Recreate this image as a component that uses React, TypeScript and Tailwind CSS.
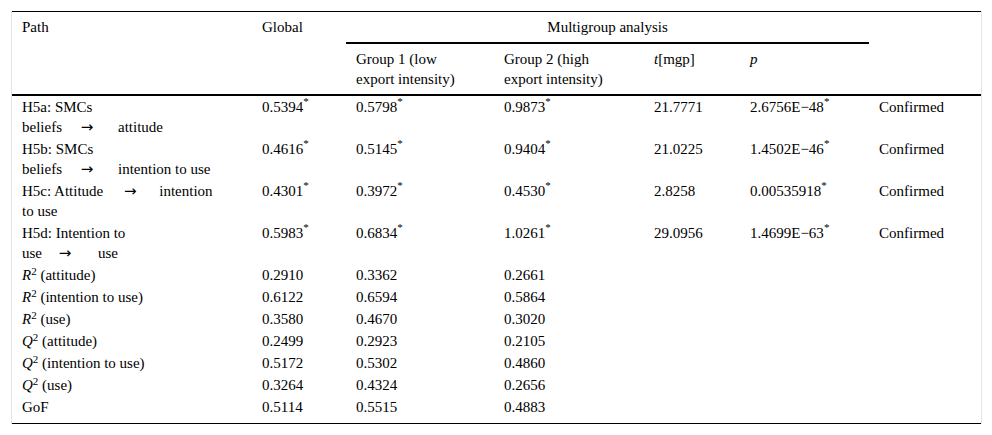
import React from "react";

const Star = () => <sup className="text-[11px] -top-[0.6em]">*</sup>;

const Arrow = ({ className }: { className: string }) => (
  <span
    className={`inline-block w-[14px] text-center font-['DejaVu_Sans',sans-serif] text-[15px] ${className}`}
  >
    →
  </span>
);

type Row = {
  path: React.ReactNode;
  global: React.ReactNode;
  g1: React.ReactNode;
  g2: React.ReactNode;
  t?: string;
  p?: React.ReactNode;
  result?: string;
};

const Sq = ({ v }: { v: string }) => (
  <>
    <i>{v}</i>
    <sup className="text-[11px]">2</sup>
  </>
);

const rows: Row[] = [
  {
    path: (
      <>
        <div>H5a: SMCs</div>
        <div>
          beliefs
          <Arrow className="ml-[18px] mr-[24px]" />
          attitude
        </div>
      </>
    ),
    global: <>0.5394<Star /></>,
    g1: <>0.5798<Star /></>,
    g2: <>0.9873<Star /></>,
    t: "21.7771",
    p: <>2.6756E−48<Star /></>,
    result: "Confirmed",
  },
  {
    path: (
      <>
        <div>H5b: SMCs</div>
        <div>
          beliefs
          <Arrow className="ml-[18px] mr-[24px]" />
          intention to use
        </div>
      </>
    ),
    global: <>0.4616<Star /></>,
    g1: <>0.5145<Star /></>,
    g2: <>0.9404<Star /></>,
    t: "21.0225",
    p: <>1.4502E−46<Star /></>,
    result: "Confirmed",
  },
  {
    path: (
      <>
        <div>
          H5c: Attitude
          <Arrow className="ml-[20px] mr-[22px]" />
          intention
        </div>
        <div>to use</div>
      </>
    ),
    global: <>0.4301<Star /></>,
    g1: <>0.3972<Star /></>,
    g2: <>0.4530<Star /></>,
    t: "2.8258",
    p: <>0.00535918<Star /></>,
    result: "Confirmed",
  },
  {
    path: (
      <>
        <div>H5d: Intention to</div>
        <div>
          use
          <Arrow className="ml-[16px] mr-[26px]" />
          use
        </div>
      </>
    ),
    global: <>0.5983<Star /></>,
    g1: <>0.6834<Star /></>,
    g2: <>1.0261<Star /></>,
    t: "29.0956",
    p: <>1.4699E−63<Star /></>,
    result: "Confirmed",
  },
  { path: <><Sq v="R" /> (attitude)</>, global: "0.2910", g1: "0.3362", g2: "0.2661" },
  { path: <><Sq v="R" /> (intention to use)</>, global: "0.6122", g1: "0.6594", g2: "0.5864" },
  { path: <><Sq v="R" /> (use)</>, global: "0.3580", g1: "0.4670", g2: "0.3020" },
  { path: <><Sq v="Q" /> (attitude)</>, global: "0.2499", g1: "0.2923", g2: "0.2105" },
  { path: <><Sq v="Q" /> (intention to use)</>, global: "0.5172", g1: "0.5302", g2: "0.4860" },
  { path: <><Sq v="Q" /> (use)</>, global: "0.3264", g1: "0.4324", g2: "0.2656" },
  { path: "GoF", global: "0.5114", g1: "0.5515", g2: "0.4883" },
];

export default function App() {
  const td = "px-[10px] py-px align-top text-left font-normal";
  const th = "px-[10px] py-[5px] align-top font-normal";
  return (
    <div className="bg-white w-[992px] h-[435px] pt-[11px] font-['Liberation_Serif','Times_New_Roman',serif] text-[15px] leading-5 text-black">
      <div className="ml-[11px] w-[971px] border-x border-[#e4e4e4]">
        <table className="table-fixed border-collapse w-[969px]">
          <colgroup>
            <col className="w-[240px]" />
            <col className="w-[94px]" />
            <col className="w-[148px]" />
            <col className="w-[150px]" />
            <col className="w-[96px]" />
            <col className="w-[129px]" />
            <col className="w-[112px]" />
          </colgroup>
          <thead>
            <tr className="border-t border-black">
              <th rowSpan={2} className={`${th} text-left border-b-2 border-black`}>Path</th>
              <th rowSpan={2} className={`${th} text-left border-b-2 border-black`}>Global</th>
              <th colSpan={4} className={`${th} text-center border-b-2 border-black`}>
                Multigroup analysis
              </th>
              <th rowSpan={2} className={`${th} text-left border-b-2 border-black`}></th>
            </tr>
            <tr>
              <th className={`${th} text-left border-b-2 border-black`}>
                Group 1 (low
                <br />
                export intensity)
              </th>
              <th className={`${th} text-left border-b-2 border-black`}>
                Group 2 (high
                <br />
                export intensity)
              </th>
              <th className={`${th} text-left border-b-2 border-black`}>
                <i>t</i>[mgp]
              </th>
              <th className={`${th} text-left border-b-2 border-black`}>
                <i>p</i>
              </th>
            </tr>
          </thead>
          <tbody className="border-b border-black">
            {rows.map((r, i) => (
              <tr key={i}>
                <td className={td}>{r.path}</td>
                <td className={td}>{r.global}</td>
                <td className={td}>{r.g1}</td>
                <td className={td}>{r.g2}</td>
                <td className={td}>{r.t}</td>
                <td className={td}>{r.p}</td>
                <td className={td}>{r.result}</td>
              </tr>
            ))}
            <tr>
              <td colSpan={7} className="h-[5px] p-0"></td>
            </tr>
          </tbody>
        </table>
      </div>
    </div>
  );
}
